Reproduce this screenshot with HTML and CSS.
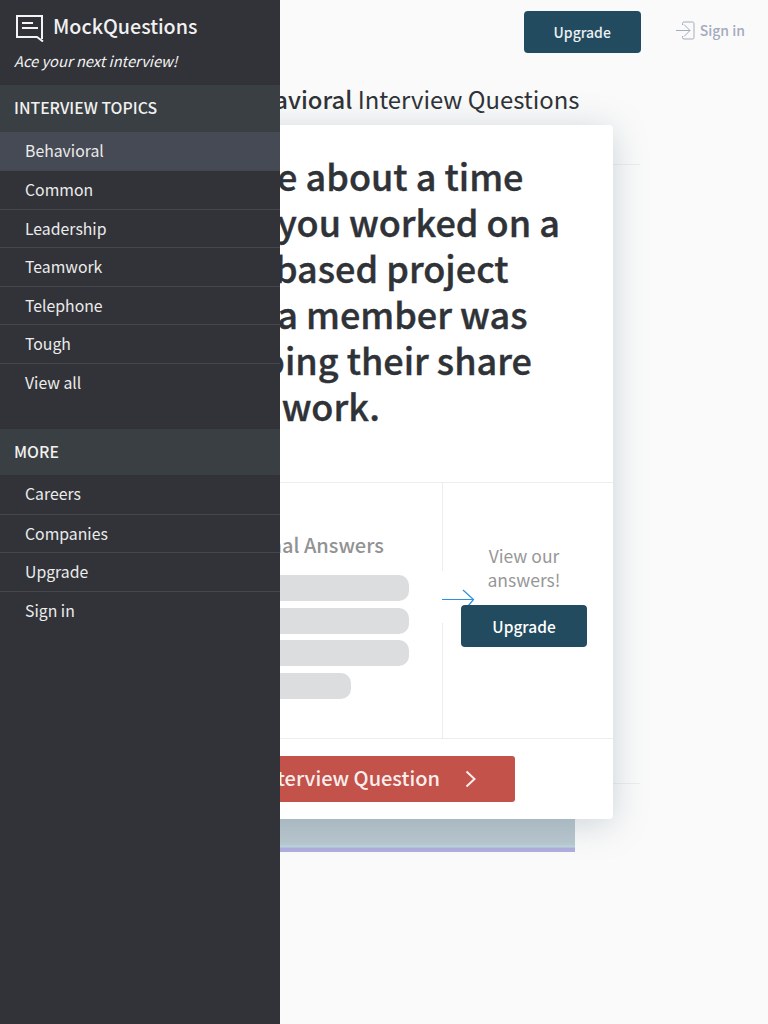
FILE: index.html
```html
<!DOCTYPE html>
<html>
<head>
<meta charset="UTF-8">
<title>Behavioral Interview Questions</title>
<link rel="stylesheet" href="styles.css">
</head>
<body>
	<div id="page">
		<header class="topbar">
			<a class="btn btn-upgrade-top" href="#">Upgrade</a>
			<a class="signin" href="#">
				<svg width="20" height="20" viewBox="0 0 20 20" fill="none" stroke="#a4abbd" stroke-width="1">
					<path d="M6.500 5V3.500a1.500 1.500 0 0 1 1.500-1.500h8.500a1.500 1.500 0 0 1 1.500 1.500v14a1.500 1.500 0 0 1-1.500 1.500H8a1.500 1.500 0 0 1-1.500-1.500V16"/>
					<path d="M0 10.500h14M8 4.500l6 6-6 6"/>
				</svg>
				Sign in
			</a>
		</header>
		<h1 class="page-title"><b>Behavioral</b> Interview Questions</h1>
		<div class="stage">
			<div class="back-panel"></div>
			<div class="video-strip"></div>
			<section class="card">
				<h2 class="question">Tell me about a time<br>when you worked on a<br>team-based project<br>when a member was<br>not doing their share<br>of the work.</h2>
				<div class="answers">
					<div class="answers-left">
						<h3>Professional Answers</h3>
						<div class="bar"></div>
						<div class="bar"></div>
						<div class="bar"></div>
						<div class="bar bar-short"></div>
					</div>
					<div class="answers-right">
						<svg class="arrow" width="34" height="52" viewBox="0 0 34 52" fill="none" stroke="#2b8fe2" stroke-width="1.200">
							<path d="M0 28.500h31M21 19l10.500 9.500-5 6"/>
						</svg>
						<p>View our answers!</p>
						<a class="btn btn-upgrade" href="#">Upgrade</a>
					</div>
				</div>
				<div class="card-foot">
					<a class="btn-next" href="#"><span class="next-label">Next Interview Question</span>
						<svg width="12" height="18" viewBox="0 0 12 18" fill="none" stroke="#fbeeec" stroke-width="2"><path d="M1.500 1.500l8 7.500-8 7.500"/></svg>
					</a>
				</div>
			</section>
		</div>
	</div>

	<aside class="drawer">
		<div class="brand">
			<div class="brand-name">
				<svg width="30" height="32" viewBox="0 0 30 32" fill="none" stroke="#f4f4f4" stroke-width="2">
					<path d="M28 29V6H3v21h20l6 4.500"/>
					<path d="M8 13h11M8 18h16"/>
				</svg>
				MockQuestions
			</div>
			<p class="tagline">Ace your next interview!</p>
		</div>
		<h4 class="menu-title">INTERVIEW TOPICS</h4>
		<ul class="menu">
			<li class="active"><a href="#">Behavioral</a></li>
			<li><a href="#">Common</a></li>
			<li><a href="#">Leadership</a></li>
			<li><a href="#">Teamwork</a></li>
			<li><a href="#">Telephone</a></li>
			<li><a href="#">Tough</a></li>
			<li><a href="#">View all</a></li>
		</ul>
		<h4 class="menu-title">MORE</h4>
		<ul class="menu">
			<li><a href="#">Careers</a></li>
			<li><a href="#">Companies</a></li>
			<li><a href="#">Upgrade</a></li>
			<li><a href="#">Sign in</a></li>
		</ul>
	</aside>
</body>
</html>
```

FILE: styles.css
```css
html, body {
	margin: 0;
	height: 100%;
}

body {
	font-family: "Noto Sans CJK JP", "Open Sans", sans-serif;
	background: #fafafa;
	color: #2f3237;
	overflow: hidden;
}

a {
	text-decoration: none;
}

#page {
	height: 1024px;
	overflow: hidden;
}

.topbar {
	display: flex;
	justify-content: flex-end;
	align-items: flex-start;
	padding: 11px 23px 0 0;
}

.btn {
	display: flex;
	align-items: center;
	justify-content: center;
	box-sizing: border-box;
	background: #234b60;
	color: #fff;
	border-radius: 4px;
	font-weight: 500;
}

.btn-upgrade-top {
	width: 117px;
	height: 42px;
	font-size: 14px;
	color: #edf1f4;
}

.signin {
	display: flex;
	align-items: center;
	gap: 4px;
	margin: 9px 0 0 35px;
	color: #a4abbd;
	font-size: 14px;
	font-weight: 500;
	line-height: 20px;
}

.page-title {
	margin: 28px 0 0 230px;
	font-size: 23.850px;
	font-weight: 400;
	line-height: 36px;
	color: #2f3237;
}

.page-title b {
	font-weight: 500;
}

.stage {
	position: relative;
	margin-top: 8px;
}

.back-panel {
	position: absolute;
	top: 39px;
	left: 120px;
	width: 520px;
	height: 620px;
	border-top: 1px solid #ecedee;
	border-bottom: 1px solid #ecedee;
	box-sizing: border-box;
}

.video-strip {
	position: absolute;
	top: 660px;
	left: 120px;
	width: 455px;
	height: 67px;
	background: linear-gradient(to bottom, #b9c6ce 0, #b9c6ce 56px, #b6ccd0 59px, #c2d4de 62px, #afadde 63px, #afadde 67px);
}

.card {
	position: relative;
	width: 458px;
	margin-left: 155px;
	background: #fff;
	border-radius: 4px;
	box-shadow: 0 5px 35px rgba(100, 125, 140, 0.3);
}

.question {
	margin: 0;
	padding: 27px 0 0 19px;
	font-size: 36px;
	font-weight: 500;
	-webkit-text-stroke: 0.4px #2f3237;
	line-height: 46px;
	height: 357px;
	box-sizing: border-box;
	white-space: nowrap;
	color: #2f3237;
}

.answers {
	display: flex;
	box-sizing: border-box;
	height: 257px;
	border-top: 1px solid #eceded;
	border-bottom: 1px solid #eceded;
}

.answers-left {
	flex: 1;
	padding: 48px 33px 0 26px;
	border-right: 1px solid #eceded;
}

.answers-left h3 {
	margin: 0 0 16px;
	font-size: 20px;
	font-weight: 500;
	line-height: 28px;
	color: #929292;
}

.bar {
	height: 26px;
	margin-bottom: 6.500px;
	background: #dcdddf;
	border-radius: 10px;
}

.bar-short {
	margin-right: 58px;
}

.answers-right {
	position: relative;
	width: 170px;
	box-sizing: border-box;
	padding: 61px 26px 0 18px;
	text-align: center;
}

.answers-right p {
	margin: 0 0 13px;
	font-size: 17.500px;
	line-height: 24px;
	color: #979797;
}

.arrow {
	position: absolute;
	top: 88px;
	left: -1px;
	background: #fff;
}

.btn-upgrade {
	position: relative;
	height: 42px;
	font-size: 15.500px;
}

.card-foot {
	height: 80px;
	padding-top: 17px;
	box-sizing: border-box;
}

.btn-next {
	display: flex;
	align-items: center;
	justify-content: flex-end;
	gap: 25px;
	width: 360px;
	height: 46px;
	padding-right: 38px;
	box-sizing: border-box;
	background: #c2524a;
	border-radius: 3px;
	color: #fbeeec;
	font-size: 20px;
	font-weight: 500;
}

.next-label {
	margin-bottom: 4px;
}

/* menu de gauche */
.drawer {
	position: fixed;
	top: 0;
	left: 0;
	bottom: 0;
	width: 280px;
	background: #313338;
	color: #f2f2f2;
}

.brand {
	height: 85px;
	padding: 10px 0 0 14px;
	box-sizing: border-box;
}

.brand-name {
	display: flex;
	align-items: flex-start;
	gap: 9px;
	font-size: 19.700px;
	font-weight: 500;
	line-height: 32px;
	color: #f1f1f1;
}

.tagline {
	margin: 7px 0 0;
	font-size: 14.700px;
	font-style: italic;
	line-height: 24px;
}

.menu-title {
	margin: 0;
	height: 46.500px;
	padding-left: 14px;
	background: #3a3f43;
	font-size: 15.800px;
	font-weight: 500;
	line-height: 45px;
	color: #f1f1f1;
}

.menu {
	list-style: none;
	margin: 0 0 27px;
	padding: 0;
}

.menu li {
	height: 38.600px;
	border-top: 1px solid #45474c;
	box-sizing: border-box;
}

.menu li:first-child {
	border-top: 0;
}

.menu li.active {
	background: #454a54;
}

.menu li a {
	display: block;
	padding-left: 25px;
	font-size: 15.800px;
	line-height: 38px;
	color: #ececec;
}
```
